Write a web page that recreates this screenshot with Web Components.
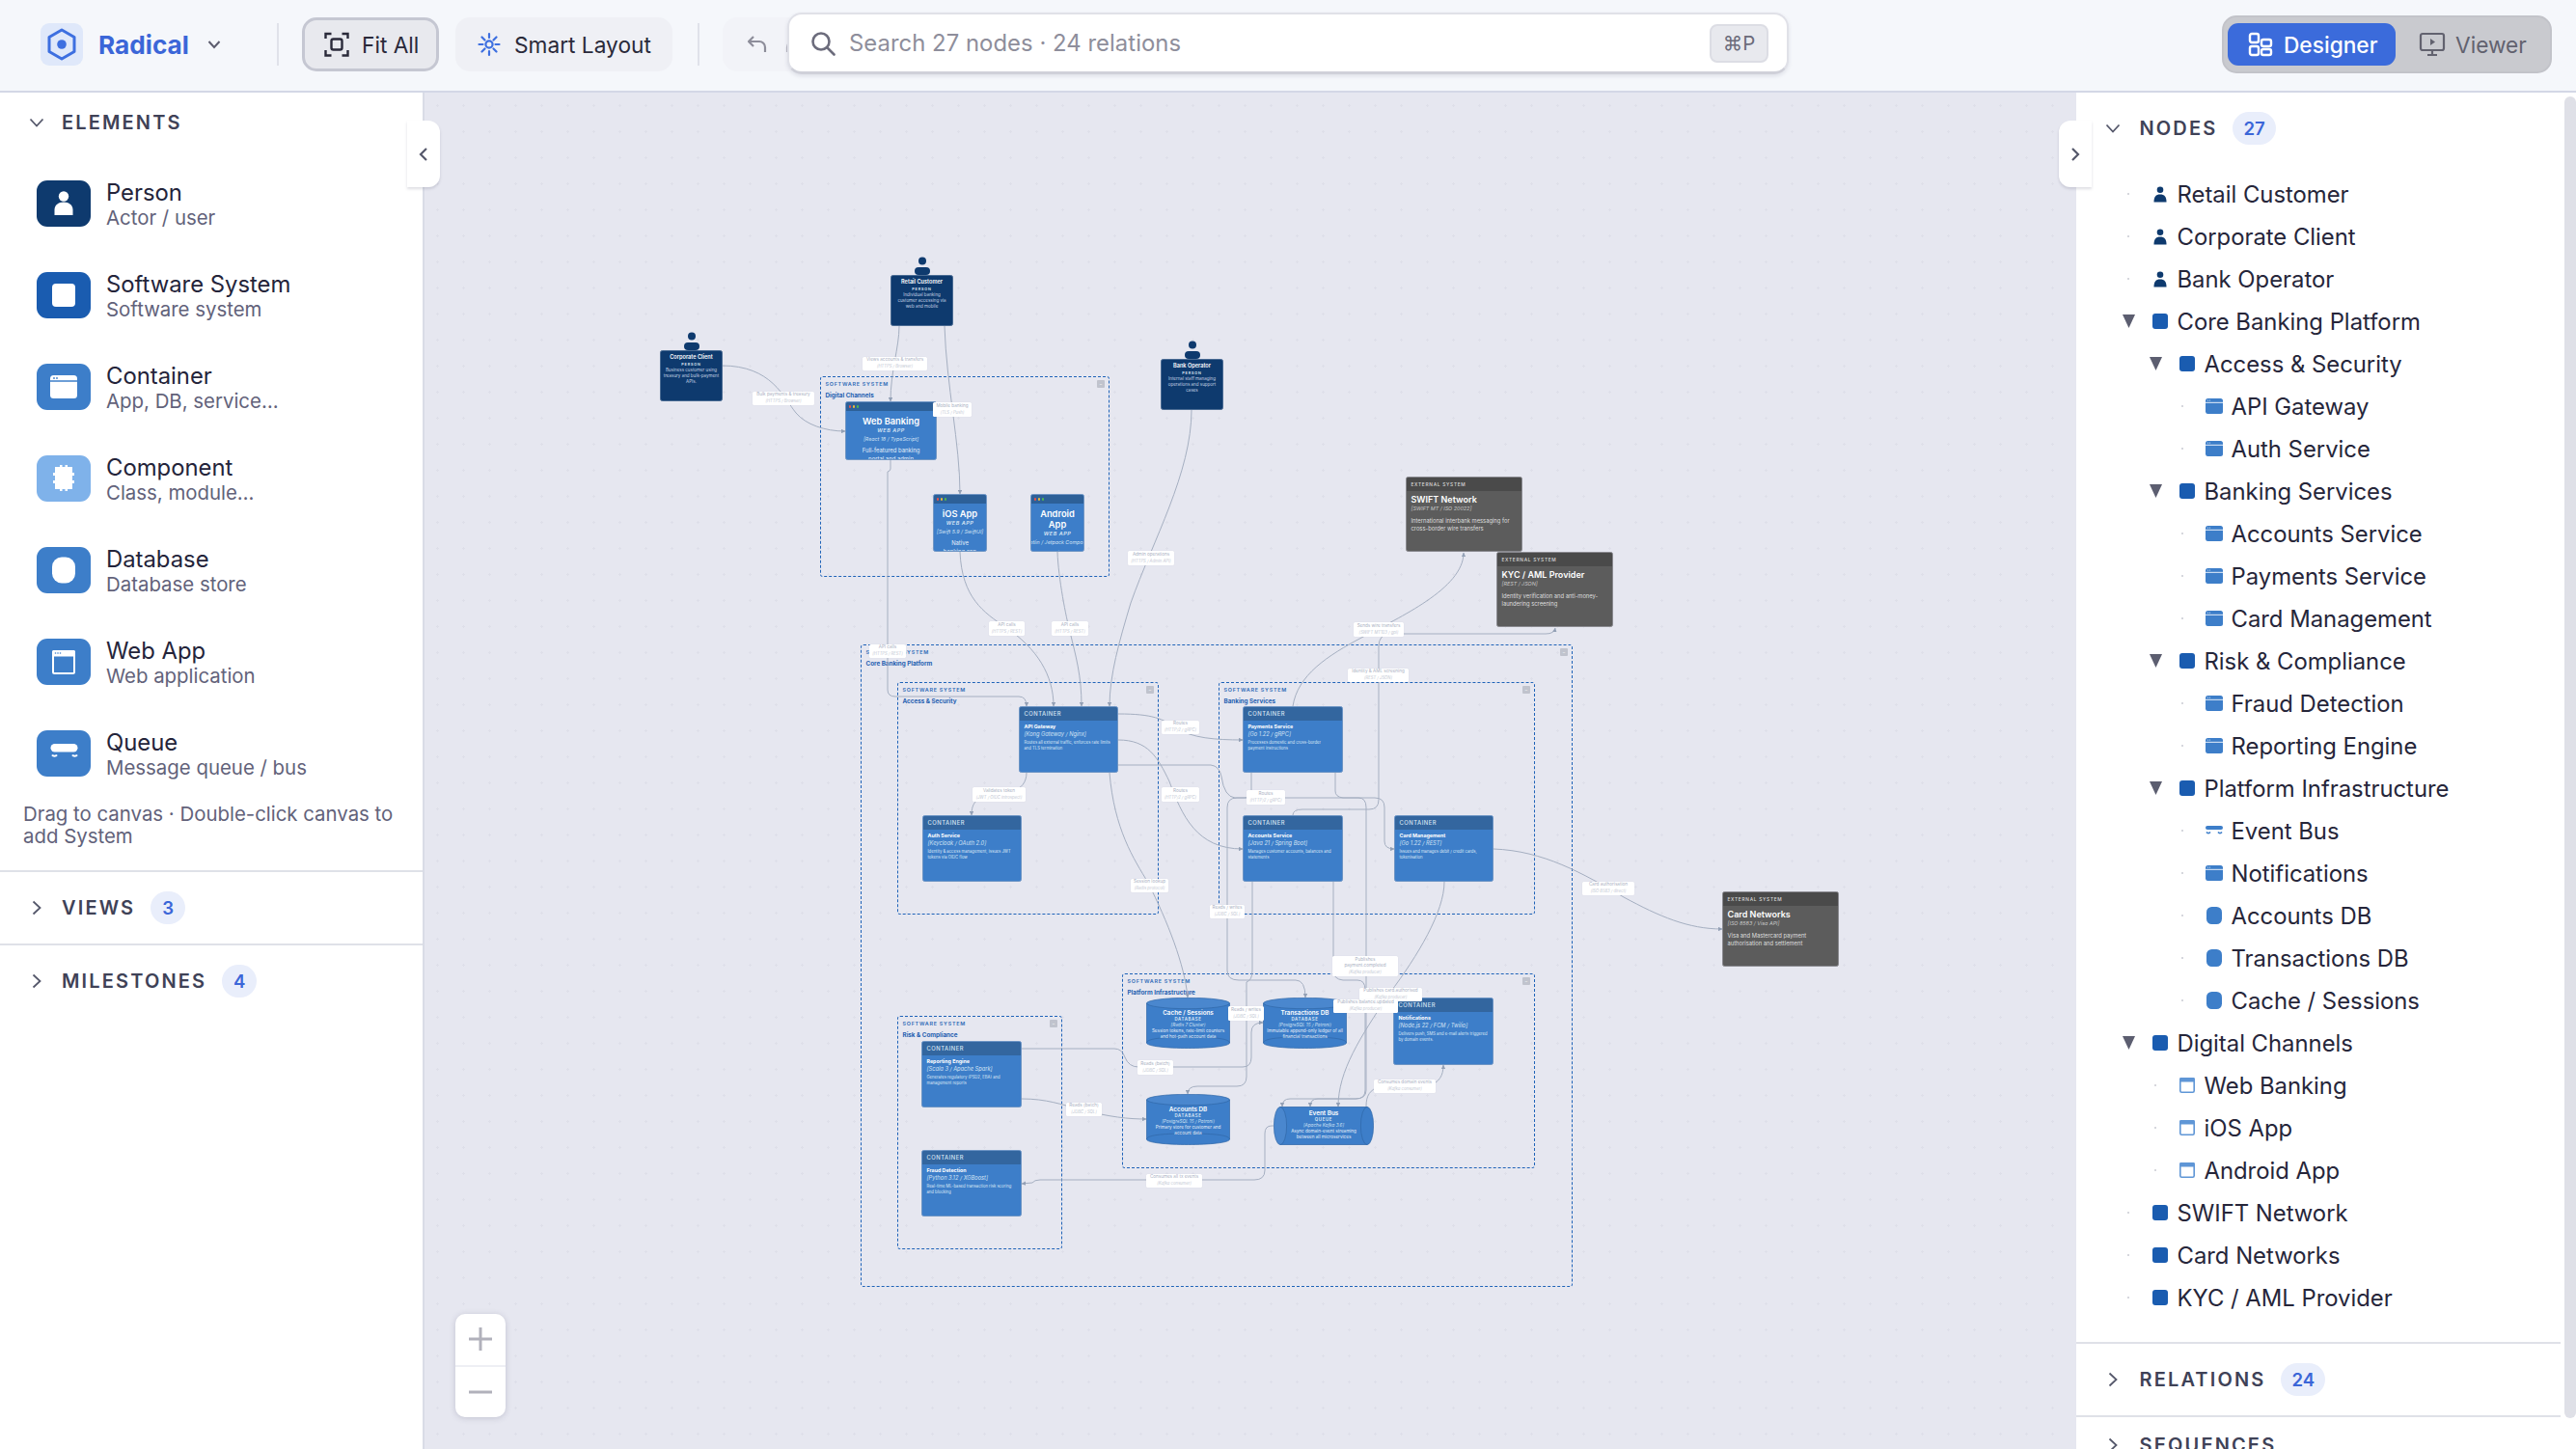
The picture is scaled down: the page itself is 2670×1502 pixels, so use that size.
<!DOCTYPE html>
<html lang="en"><head><meta charset="utf-8"><title>Radical</title>
<style>
html,body{margin:0;padding:0;height:100%;overflow:hidden;background:#f5f7fb;font-family:Inter,"Liberation Sans",sans-serif}
</style></head>
<body>
<app-shell>
  <top-bar slot="top"></top-bar>
  <palette-panel slot="left">
    <section-head label="ELEMENTS" open compact></section-head>
    <palette-list>
      <palette-item icon="person" color="#0e3a6e" name="Person" sub="Actor / user"></palette-item>
      <palette-item icon="system" color="#1a5cb0" name="Software System" sub="Software system"></palette-item>
      <palette-item icon="container" color="#3d7ec9" name="Container" sub="App, DB, service…"></palette-item>
      <palette-item icon="component" color="#7fb2ea" name="Component" sub="Class, module…"></palette-item>
      <palette-item icon="database" color="#3d7ec9" name="Database" sub="Database store"></palette-item>
      <palette-item icon="webapp" color="#3d7ec9" name="Web App" sub="Web application"></palette-item>
      <palette-item icon="queue" color="#3d7ec9" name="Queue" sub="Message queue / bus"></palette-item>
      <palette-hint>Drag to canvas · Double-click canvas to add System</palette-hint>
    </palette-list>
    <section-head label="VIEWS" count="3" ruled></section-head>
    <section-head label="MILESTONES" count="4" ruled></section-head>
  </palette-panel>
  <diagram-canvas slot="center">
    <d-group x="892" y="668" w="738" h="666" name="Core Banking Platform"></d-group>
    <d-group x="850" y="390" w="300" h="208" name="Digital Channels"></d-group>
    <d-group x="930" y="707" w="271" h="241" name="Access &amp; Security"></d-group>
    <d-group x="1263" y="707" w="328" h="241" name="Banking Services"></d-group>
    <d-group x="1163" y="1009" w="428" h="202" name="Platform Infrastructure"></d-group>
    <d-group x="930" y="1053" w="171" h="242" name="Risk &amp; Compliance"></d-group>
    <d-edges></d-edges>
    <d-node kind="person" x="923" y="285" w="65" h="53" name="Retail Customer" desc="Individual banking customer accessing via web and mobile"></d-node>
    <d-node kind="person" x="684" y="363" w="65" h="53" name="Corporate Client" desc="Business customer using treasury and bulk-payment APIs."></d-node>
    <d-node kind="person" x="1203" y="372" w="65" h="53" name="Bank Operator" desc="Internal staff managing operations and support cases"></d-node>
    <d-node kind="webapp" x="876" y="416" w="95" h="61" name="Web Banking" tech="[React 18 / TypeScript]" desc="Full-featured banking portal and admin dashboard"></d-node>
    <d-node kind="webapp" x="967" y="512" w="56" h="60" name="iOS App" tech="[Swift 5.9 / SwiftUI]" desc="Native banking app"></d-node>
    <d-node kind="webapp" x="1068" y="512" w="56" h="60" name="Android App" tech="[Kotlin / Jetpack Compose]" desc="Native Android app"></d-node>
    <d-node kind="external" x="1457" y="494" w="121" h="78" name="SWIFT Network" tech="[SWIFT MT / ISO 20022]" desc="International interbank messaging for cross-border wire transfers"></d-node>
    <d-node kind="external" x="1551" y="572" w="121" h="78" name="KYC / AML Provider" tech="[REST / JSON]" desc="Identity verification and anti-money-laundering screening"></d-node>
    <d-node kind="external" x="1785" y="924" w="121" h="78" name="Card Networks" tech="[ISO 8583 / Visa API]" desc="Visa and Mastercard payment authorisation and settlement"></d-node>
    <d-node kind="container" x="1056" y="732" w="103" h="69" name="API Gateway" tech="[Kong Gateway / Nginx]" desc="Routes all external traffic, enforces rate limits and TLS termination"></d-node>
    <d-node kind="container" x="956" y="845" w="103" h="69" name="Auth Service" tech="[Keycloak / OAuth 2.0]" desc="Identity &amp; access management, issues JWT tokens via OIDC flow"></d-node>
    <d-node kind="container" x="1288" y="732" w="104" h="69" name="Payments Service" tech="[Go 1.22 / gRPC]" desc="Processes domestic and cross-border payment instructions"></d-node>
    <d-node kind="container" x="1288" y="845" w="104" h="69" name="Accounts Service" tech="[Java 21 / Spring Boot]" desc="Manages customer accounts, balances and statements"></d-node>
    <d-node kind="container" x="1445" y="845" w="103" h="69" name="Card Management" tech="[Go 1.22 / REST]" desc="Issues and manages debit / credit cards, tokenisation"></d-node>
    <d-node kind="container" x="1444" y="1034" w="104" h="70" name="Notifications" tech="[Node.js 22 / FCM / Twilio]" desc="Delivers push, SMS and e-mail alerts triggered by domain events."></d-node>
    <d-node kind="container" x="955" y="1079" w="104" h="69" name="Reporting Engine" tech="[Scala 3 / Apache Spark]" desc="Generates regulatory (PSD2, EBA) and management reports"></d-node>
    <d-node kind="container" x="955" y="1192" w="104" h="69" name="Fraud Detection" tech="[Python 3.12 / XGBoost]" desc="Real-time ML-based transaction risk scoring and blocking"></d-node>
    <d-node kind="database" x="1188" y="1034" w="87" h="53" name="Cache / Sessions" tech="[Redis 7 Cluster]" desc="Session tokens, rate-limit counters and hot-path account data"></d-node>
    <d-node kind="database" x="1309" y="1034" w="87" h="53" name="Transactions DB" tech="[PostgreSQL 15 / Patroni]" desc="Immutable append-only ledger of all financial transactions"></d-node>
    <d-node kind="database" x="1188" y="1134" w="87" h="53" name="Accounts DB" tech="[PostgreSQL 15 / Patroni]" desc="Primary store for customer and account data"></d-node>
    <d-node kind="queue" x="1320" y="1147" w="104" h="40" name="Event Bus" tech="[Apache Kafka 3.6]" desc="Async domain-event streaming between all microservices"></d-node>
    <d-label x="894" y="370" w="67" h="14" text="Views accounts &amp; transfers" tech="[HTTPS / Browser]"></d-label>
    <d-label x="967" y="417" w="40" h="15" text="Mobile banking" tech="[TLS / Push]"></d-label>
    <d-label x="780" y="406" w="64" h="14" text="Bulk payments &amp; treasury" tech="[HTTPS / Browser]"></d-label>
    <d-label x="1169" y="571" w="48" h="15" text="Admin operations" tech="[HTTPS / Admin API]"></d-label>
    <d-label x="901" y="668" w="38" h="14" text="API calls" tech="[HTTPS / REST]"></d-label>
    <d-label x="1025" y="644" w="37" h="15" text="API calls" tech="[HTTPS / REST]"></d-label>
    <d-label x="1090" y="644" w="38" h="15" text="API calls" tech="[HTTPS / REST]"></d-label>
    <d-label x="1008" y="816" w="55" h="15" text="Validates token" tech="[JWT / OIDC introspect]"></d-label>
    <d-label x="1204" y="747" w="39" h="14" text="Routes" tech="[HTTP/2 / gRPC]"></d-label>
    <d-label x="1204" y="816" w="39" h="15" text="Routes" tech="[HTTP/2 / gRPC]"></d-label>
    <d-label x="1292" y="819" w="40" h="15" text="Routes" tech="[HTTP/2 / gRPC]"></d-label>
    <d-label x="1172" y="911" w="39" h="14" text="Session lookup" tech="[Redis protocol]"></d-label>
    <d-label x="1254" y="938" w="36" h="14" text="Reads / writes" tech="[JDBC / SQL]"></d-label>
    <d-label x="1403" y="645" w="52" h="15" text="Sends wire transfers" tech="[SWIFT MT103 / gpi]"></d-label>
    <d-label x="1397" y="693" w="63" h="14" text="Identity &amp; AML screening" tech="[REST / JSON]"></d-label>
    <d-label x="1640" y="914" w="54" h="14" text="Card authorisation" tech="[ISO 8583 / direct]"></d-label>
    <d-label x="1381" y="991" w="68" h="21" text="Publishes payment.completed" tech="[Kafka producer]" wrap></d-label>
    <d-label x="1409" y="1024" w="65" h="14" text="Publishes card.authorised" tech="[Kafka producer]"></d-label>
    <d-label x="1382" y="1036" w="67" h="14" text="Publishes balance.updated" tech="[Kafka producer]"></d-label>
    <d-label x="1273" y="1043" w="37" h="15" text="Reads / writes" tech="[JDBC / SQL]"></d-label>
    <d-label x="1179" y="1099" w="37" h="15" text="Reads (batch)" tech="[JDBC / SQL]"></d-label>
    <d-label x="1105" y="1143" w="37" h="14" text="Reads (batch)" tech="[JDBC / SQL]"></d-label>
    <d-label x="1424" y="1119" w="64" h="14" text="Consumes domain events" tech="[Kafka consumer]"></d-label>
    <d-label x="1188" y="1217" w="58" h="14" text="Consumes all tx events" tech="[Kafka consumer]"></d-label>
    <zoom-control></zoom-control>
    <panel-tab side="left"></panel-tab>
    <panel-tab side="right"></panel-tab>
  </diagram-canvas>
  <outline-panel slot="right">
    <section-head label="NODES" count="27" open></section-head>
    <tree-list>
      <tree-row level="0" kind="person">Retail Customer</tree-row>
      <tree-row level="0" kind="person">Corporate Client</tree-row>
      <tree-row level="0" kind="person">Bank Operator</tree-row>
      <tree-row level="0" kind="system" caret>Core Banking Platform</tree-row>
      <tree-row level="1" kind="system" caret>Access &amp; Security</tree-row>
      <tree-row level="2" kind="container">API Gateway</tree-row>
      <tree-row level="2" kind="container">Auth Service</tree-row>
      <tree-row level="1" kind="system" caret>Banking Services</tree-row>
      <tree-row level="2" kind="container">Accounts Service</tree-row>
      <tree-row level="2" kind="container">Payments Service</tree-row>
      <tree-row level="2" kind="container">Card Management</tree-row>
      <tree-row level="1" kind="system" caret>Risk &amp; Compliance</tree-row>
      <tree-row level="2" kind="container">Fraud Detection</tree-row>
      <tree-row level="2" kind="container">Reporting Engine</tree-row>
      <tree-row level="1" kind="system" caret>Platform Infrastructure</tree-row>
      <tree-row level="2" kind="queue">Event Bus</tree-row>
      <tree-row level="2" kind="container">Notifications</tree-row>
      <tree-row level="2" kind="database">Accounts DB</tree-row>
      <tree-row level="2" kind="database">Transactions DB</tree-row>
      <tree-row level="2" kind="database">Cache / Sessions</tree-row>
      <tree-row level="0" kind="system" caret>Digital Channels</tree-row>
      <tree-row level="1" kind="webapp">Web Banking</tree-row>
      <tree-row level="1" kind="webapp">iOS App</tree-row>
      <tree-row level="1" kind="webapp">Android App</tree-row>
      <tree-row level="0" kind="system">SWIFT Network</tree-row>
      <tree-row level="0" kind="system">Card Networks</tree-row>
      <tree-row level="0" kind="system">KYC / AML Provider</tree-row>
    </tree-list>
    <section-head label="RELATIONS" count="24" ruled></section-head>
    <section-head label="SEQUENCES" ruled tight></section-head>
  </outline-panel>
</app-shell>
<script>
const FONT = 'Inter,"Liberation Sans",sans-serif';
function def(name, render) {
  customElements.define(name, class extends HTMLElement {
    constructor(){ super(); this.attachShadow({mode:'open'}); }
    connectedCallback(){ this.shadowRoot.innerHTML = render(this); }
  });
}
const esc = s => (s||'').replace(/&/g,'&amp;').replace(/</g,'&lt;');
const OX = 440, OY = 96;
const placed = el => `left:${+el.getAttribute('x')-OX}px;top:${+el.getAttribute('y')-OY}px;width:${el.getAttribute('w')}px;height:${el.getAttribute('h')}px;`;

def('app-shell', () => `<style>
:host{display:grid;grid-template-columns:440px 1fr 518px;grid-template-rows:96px 1fr;width:2670px;height:1502px;overflow:hidden;font-family:${FONT}}
.top{grid-column:1/4}
</style><div class="top"><slot name="top"></slot></div><slot name="left"></slot><slot name="center"></slot><slot name="right"></slot>`);

def('top-bar', () => `<style>
:host{display:flex;align-items:center;box-sizing:border-box;height:96px;padding:0 25px 2px 42px;background:#f5f7fb;border-bottom:2px solid #d3d7e6;position:relative;color:#26263a}
.logo{width:44px;height:44px;border-radius:9px;background:#dfe8fa;display:flex;align-items:center;justify-content:center}
.brand{font-weight:700;font-size:26.2px;color:#3b66d8;margin-left:16px;width:93px;white-space:nowrap}
.drop{margin-left:20px;display:flex}
.sep{width:2px;height:44px;background:#e0e2ea;margin:0 24px 0 26px}
.sep.a{margin:0 24px 0 58px}
.btn{display:flex;align-items:center;box-sizing:border-box;height:56px;border-radius:15px;font-size:22.7px;color:#2a2a3a;white-space:nowrap}
.fit{width:142px;background:#e8e9ee;border:3px solid #c5c7d2;padding-left:20px;gap:13px}
.smart{width:225px;background:#eff0f5;padding-left:23px;gap:14px;margin-left:17px}
.undo{width:130px;height:56px;background:#f2f3f8;border-radius:15px;display:flex;align-items:center;padding-left:25px;box-sizing:border-box;gap:17px}
.search{position:absolute;left:816px;top:13px;width:1038px;height:64px;box-sizing:border-box;background:#fff;border:2px solid #e0e1e8;border-bottom:3px solid #cfd0d9;border-radius:15px;display:flex;align-items:center;padding:0 19px 0 22px;box-shadow:0 2px 4px rgba(60,60,90,.12)}
.ph{margin-left:14px;flex:1;font-size:23.84px;color:#8e8e9b;letter-spacing:.05px}
.kbd{width:61px;height:40px;box-sizing:border-box;background:#e8e9ee;border:2px solid #dcdde4;border-radius:8px;font-size:20.4px;color:#6b6b7a;display:flex;align-items:center;justify-content:center}
.grow{flex:1}
.seg{display:flex;box-sizing:border-box;width:342px;height:60px;background:#c9cacf;border:2px solid #c2c3c9;border-radius:15px;padding:6px 4px;align-items:stretch}
.d{width:174px;background:#3b6bdb;border-radius:11px;color:#fff;display:flex;align-items:center;gap:11px;padding-left:21px;box-sizing:border-box;font-size:22.7px;font-weight:500}
.v{flex:1;display:flex;align-items:center;gap:10px;padding-left:24px;color:#62626f;font-size:22.7px}
</style>
<div class="logo"><svg width="32" height="34" viewBox="0 0 32 34"><path d="M16 2 29 9.5v15L16 32 3 24.5v-15z" fill="none" stroke="#3d6fe0" stroke-width="3" stroke-linejoin="round"/><circle cx="16" cy="17" r="4.8" fill="#3d6fe0"/></svg></div>
<span class="brand">Radical</span>
<span class="drop"><svg width="14" height="10" viewBox="0 0 14 10"><path d="M1.5 2 7 8l5.5-6" fill="none" stroke="#5c5c6e" stroke-width="2"/></svg></span>
<span class="sep a"></span>
<div class="btn fit"><svg width="26" height="26" viewBox="0 0 26 26" fill="none" stroke="#2a2a3a" stroke-width="2.4"><path d="M1.5 7V2h6M18.500 2h6v5M24.500 19v5.500h-6M7.500 24.500h-6V19"/><rect x="7.500" y="7.500" width="11" height="11" rx="2"/></svg><span>Fit All</span></div>
<div class="btn smart"><svg width="24" height="26" viewBox="0 0 24 26" fill="none" stroke="#3d6fe0" stroke-width="2.2" stroke-linecap="round"><circle cx="12" cy="13" r="3.600"/><path d="M12 2v4M12 20v4M1.500 13h4M18.500 13h4M4.500 5.500l3 3M16.500 17.500l3 3M19.500 5.500l-3 3M7.500 17.500l-3 3"/></svg><span>Smart Layout</span></div>
<span class="sep"></span>
<div class="undo"><svg width="22" height="20" viewBox="0 0 22 20" fill="none" stroke="#8d8d9a" stroke-width="2.2" stroke-linejoin="round"><path d="M7 2 2 7l5 5M2 7h11a6 6 0 0 1 6 6v5"/></svg><svg width="22" height="20" viewBox="0 0 22 20" fill="none" stroke="#b9b9c4" stroke-width="2.2"><path d="M15 2l5 5-5 5M20 7H9a6 6 0 0 0-6 6v5"/></svg></div>
<div class="search"><svg width="26" height="26" viewBox="0 0 26 26" fill="none" stroke="#6c6c7c" stroke-width="2.600" stroke-linecap="round"><circle cx="11" cy="11" r="8.500"/><path d="m17.500 17.500 7 7"/></svg><span class="ph">Search 27 nodes · 24 relations</span><span class="kbd">⌘P</span></div>
<span class="grow"></span>
<div class="seg"><div class="d"><svg width="26" height="26" viewBox="0 0 26 26" fill="none" stroke="#fff" stroke-width="2.400"><rect x="2" y="2" width="9" height="9" rx="2"/><rect x="14" y="8" width="10" height="7" rx="2"/><rect x="2" y="15" width="9" height="9" rx="2"/><rect x="14" y="18" width="10" height="6" rx="2"/></svg><span>Designer</span></div><div class="v"><svg width="28" height="26" viewBox="0 0 28 26" fill="none" stroke="#62626f" stroke-width="2.200"><rect x="2" y="2" width="24" height="17" rx="2"/><path d="M9 24h10M14 19v5"/><path d="M12 7l5 3.500-5 3.500z" fill="#62626f" stroke="none"/></svg><span>Viewer</span></div></div>`);

def('section-head', el => {
  const open = el.hasAttribute('open'), c = el.getAttribute('count');
  const h = el.hasAttribute('tight') ? 60 : el.hasAttribute('compact') ? 62 : el.hasAttribute('ruled') ? 76 : 74;
  return `<style>
:host{display:flex;align-items:center;box-sizing:border-box;height:${h}px;padding-left:var(--head-pad,30px);${el.hasAttribute('ruled')?'border-top:2px solid #dfe1e8;':''}flex:none}
.c{width:16px;display:flex;justify-content:center;margin-right:var(--head-gap,18px)}
.t{font-size:20px;font-weight:600;letter-spacing:2.15px;color:#3f4257}
.b{margin-left:16px;height:34px;min-width:36px;padding:0 11px;box-sizing:border-box;border-radius:17px;background:#e9eefb;color:#3b66d8;font-size:18.6px;font-weight:600;display:flex;align-items:center;justify-content:center}
</style><span class="c"><svg width="16" height="16" viewBox="0 0 16 16" fill="none" stroke="#55586b" stroke-width="1.800">${open?'<path d="M1.500 4.500 8 11.500l6.500-7"/>':'<path d="M4.500 1.500 11.500 8l-7 6.500"/>'}</svg></span><span class="t">${el.getAttribute('label')}</span>${c?`<span class="b">${c}</span>`:''}`;
});

def('palette-panel', () => `<style>:host{display:flex;flex-direction:column;box-sizing:border-box;background:#fff;border-right:2px solid #d9dce6;overflow:hidden;position:relative}</style><slot></slot>`);
def('palette-list', () => `<style>:host{display:flex;flex-direction:column;gap:47px;padding:29px 0 24px 38px}</style><slot></slot>`);
def('palette-hint', () => `<style>:host{display:block;margin:-20px 20px 0 -14px;font-size:20.4px;line-height:23px;color:#62627a}</style><slot></slot>`);

const paletteIcons = {
  person:`<circle cx="28" cy="16.500" r="5.200" fill="#fff"/><path d="M18.500 36v-5.500c0-5 4-8 9.500-8s9.500 3 9.500 8V36z" fill="#fff"/>`,
  system:`<rect x="16" y="12" width="24" height="24" rx="4" fill="#fff"/>`,
  container:`<rect x="14" y="12" width="28" height="24" rx="3.500" fill="#fff"/><path d="M14 18h28" stroke="#3d7ec9" stroke-width="1.500"/><circle cx="18" cy="15" r=".9" fill="#3d7ec9"/><circle cx="21" cy="15" r=".9" fill="#3d7ec9"/>`,
  component:`<path d="M19 12h5v-2h2.500v2h3v-2H32v2h5v6h2v3h-2v5h2v3h-2v6H32v2h-2.500v-2h-3v2H24v-2h-5v-6h-2v-3h2v-5h-2v-3h2z" fill="#fff"/>`,
  database:`<rect x="16" y="10.500" width="24" height="27" rx="10" fill="#fff"/>`,
  webapp:`<rect x="17" y="13" width="22" height="23" rx="1.500" fill="#3d7ec9" stroke="#fff" stroke-width="2"/><rect x="16" y="12" width="24" height="6.500" rx="1.500" fill="#fff"/><circle cx="19.500" cy="15" r=".8" fill="#3d7ec9"/><circle cx="22" cy="15" r=".8" fill="#3d7ec9"/><circle cx="24.500" cy="15" r=".8" fill="#3d7ec9"/>`,
  queue:`<rect x="14.500" y="14" width="28" height="8.500" rx="4.200" fill="#fff"/><path d="M16 25.500c1 1.500 4 1.500 5 0M37 25.500c1 1.500 4 1.500 5 0" stroke="#fff" stroke-width="2" fill="none"/>`
};
def('palette-item', el => `<style>
:host{display:flex;align-items:center;height:48px;gap:16px}
.i{width:56px;height:48px;border-radius:11px;background:${el.getAttribute('color')};flex:none}
.i svg{display:block}
.x{padding-top:4px;display:flex;flex-direction:column}
.n{font-size:23.84px;line-height:26px;color:#24243a}
.s{font-size:20.4px;line-height:26px;color:#62627a}
</style><div class="i"><svg width="56" height="48" viewBox="0 0 56 48">${paletteIcons[el.getAttribute('icon')]}</svg></div><div class="x"><span class="n">${esc(el.getAttribute('name'))}</span><span class="s">${esc(el.getAttribute('sub'))}</span></div>`);

def('outline-panel', () => `<style>:host{display:flex;flex-direction:column;box-sizing:border-box;background:#fff;overflow:hidden;position:relative;padding-right:16px;--head-pad:30px;--head-gap:19.5px}
.bar{position:absolute;right:0;top:4px;width:12px;height:1370px;border-radius:6px;background:#dfe0e7}</style><slot></slot><div class="bar"></div>`);
def('tree-list', () => `<style>:host{display:block;padding:9px 0 24px;flex:none}</style><slot></slot>`);

const treeIcons = {
  person:`<svg width="14" height="17" viewBox="0 0 14 17"><circle cx="7" cy="3.800" r="3.300" fill="#0e3a6e"/><path d="M.5 16.500c0-5.500 2-8 6.500-8s6.500 2.500 6.500 8z" fill="#0e3a6e"/></svg>`,
  system:`<svg width="16" height="16" viewBox="0 0 16 16"><rect width="16" height="16" rx="3" fill="#1a5cb0"/></svg>`,
  container:`<svg width="18" height="16" viewBox="0 0 18 16"><rect width="18" height="16" rx="2.500" fill="#3d7ec9"/><rect x="0" y="3.800" width="18" height="1.100" fill="#d6e5f6"/><circle cx="2.500" cy="2" r=".6" fill="#d6e5f6"/><circle cx="4.500" cy="2" r=".6" fill="#d6e5f6"/></svg>`,
  database:`<svg width="16" height="18" viewBox="0 0 16 18"><rect width="16" height="18" rx="5.500" fill="#3d7ec9"/></svg>`,
  webapp:`<svg width="16" height="16" viewBox="0 0 16 16"><rect x=".8" y=".8" width="14.400" height="14.400" rx="1.500" fill="#fff" stroke="#5f96d6" stroke-width="1.600"/><rect x="0" y="0" width="16" height="4.500" rx="1.500" fill="#5f96d6"/></svg>`,
  queue:`<svg width="18" height="10" viewBox="0 0 18 10"><rect width="18" height="4" rx="2" fill="#3d7ec9"/><path d="M1 6.500c1 1.500 3 1.500 4 0M13 6.500c1 1.500 3 1.500 4 0" stroke="#3d7ec9" stroke-width="1.500" fill="none"/></svg>`
};
def('tree-row', el => `<style>
:host{display:flex;align-items:center;height:44px;padding-left:${45+28*(+el.getAttribute('level'))}px;font-size:23.84px;color:#26263a;white-space:nowrap}
.c{width:18px;display:flex;justify-content:center;margin-right:14px}
.i{width:20px;display:flex;justify-content:center;margin-right:7.5px}
.dot{width:2px;height:2px;background:#c9cad2;border-radius:50%}
</style><span class="c">${el.hasAttribute('caret')?'<svg width="13" height="14" viewBox="0 0 13 14"><path d="M0 0h13L6.500 14z" fill="#5c5e70"/></svg>':'<span class="dot"></span>'}</span><span class="i">${treeIcons[el.getAttribute('kind')]}</span><slot></slot>`);

def('diagram-canvas', () => `<style>:host{display:block;position:relative;overflow:visible;height:1406px;background-color:#e6e7f0;background-image:radial-gradient(circle,#dedfe9 1px,transparent 1.300px);background-size:27px 27px}</style><slot></slot>`);

def('panel-tab', el => { const l = el.getAttribute('side')==='left'; return `<style>
:host{position:absolute;z-index:5;${l?'left:-18px;width:34px;border-radius:0 12px 12px 0;':'right:-16px;width:34px;border-radius:12px 0 0 12px;'}top:29px;height:69px;background:#fff;box-shadow:0 2px 3px rgba(70,70,100,.18);display:flex;align-items:center;justify-content:center}
</style><svg width="12" height="16" viewBox="0 0 12 16" fill="none" stroke="#55586b" stroke-width="2.200">${l?'<path d="M9 2 3 8l6 6"/>':'<path d="M3 2l6 6-6 6"/>'}</svg>`; });

def('zoom-control', () => `<style>
:host{position:absolute;left:32px;top:1266px;width:52px;height:107px;background:#fff;border-radius:10px;box-shadow:0 1px 6px rgba(70,70,100,.22);display:flex;flex-direction:column}
.b{height:53px;display:flex;align-items:center;justify-content:center}
.b+.b{border-top:2px solid #eeeff4}
</style><div class="b"><svg width="24" height="24" viewBox="0 0 24 24" fill="none" stroke="#b1b1bb" stroke-width="3"><path d="M12 0v24M0 12h24"/></svg></div><div class="b"><svg width="24" height="4" viewBox="0 0 24 4" fill="none" stroke="#b1b1bb" stroke-width="3"><path d="M0 2h24"/></svg></div>`);

def('d-group', el => `<style>
:host{position:absolute;${placed(el)}box-sizing:border-box;border:1px dashed #1f63b8;border-radius:3px}
.l{position:absolute;left:4.500px;top:4px;font-size:5.400px;line-height:7px;font-weight:600;letter-spacing:.75px;color:#2c69b6;white-space:nowrap}
.n{position:absolute;left:4.500px;top:14.500px;font-size:6.300px;line-height:9px;font-weight:700;color:#1f5fb0;white-space:nowrap}
.b{position:absolute;right:4px;top:2.500px;width:8px;height:8px;border-radius:1px;background:#c0c3cd;color:#fff;font-size:5px;line-height:8px;text-align:center}
</style><span class="l">SOFTWARE SYSTEM</span><span class="n">${esc(el.getAttribute('name'))}</span><span class="b">−</span>`);

const personIcon = `<svg style="position:absolute;left:50%;margin-left:-9px;top:-19.500px" width="18" height="19" viewBox="0 0 18 19"><circle cx="9" cy="4.500" r="4" fill="#0e3a6e"/><rect x="1" y="11" width="16" height="8" rx="4" fill="#0e3a6e"/></svg>`;
def('d-node', el => {
  const k = el.getAttribute('kind'), name = esc(el.getAttribute('name')), tech = esc(el.getAttribute('tech')), desc = esc(el.getAttribute('desc'));
  const base = `:host{position:absolute;${placed(el)}color:#fff;white-space:normal}.box{position:absolute;inset:0;overflow:hidden;box-sizing:border-box;border-radius:2.500px}`;
  if (k==='person') return `<style>${base}.box{background:#0e3a6e;border:.5px solid #4a6b93;text-align:center;padding:3px 2px 0}
.n{font-size:5.600px;line-height:7px;font-weight:600}.t{font-size:3.800px;line-height:6px;margin-top:1px;letter-spacing:.8px;font-weight:600;color:#dfe7f1}.d{font-size:4.500px;line-height:6px;color:#c4d2e4}</style>${personIcon}<div class="box"><div class="n">${name}</div><div class="t">PERSON</div><div class="d">${desc}</div></div>`;
  if (k==='webapp') return `<style>${base}.box{background:#3d7ec9;border:.5px solid #7096c4;text-align:center}
.h{height:9px;background:#2d6098;display:flex;align-items:center;gap:1.500px;padding-left:3px}.h i{width:2.400px;height:2.400px;border-radius:50%}
.c{padding:5px 8px 0}.n{font-size:9.300px;line-height:11px;font-weight:600}
.t{font-size:5.400px;line-height:8px;font-weight:600;font-style:italic;letter-spacing:.55px;color:#dbe7f5;white-space:nowrap}
.k{font-size:5.300px;line-height:8px;margin-top:.7px;font-style:italic;color:#cfe0f3;white-space:nowrap;display:flex;justify-content:center}
.d{font-size:5.900px;line-height:9.300px;margin-top:3.300px;color:#e4eef9}</style><div class="box"><div class="h"><i style="background:#e8524a"></i><i style="background:#e6b93e"></i><i style="background:#4fb84f"></i></div><div class="c"><div class="n">${name}</div><div class="t">WEB APP</div><div class="k"><span>${tech}</span></div><div class="d">${desc}</div></div></div>`;
  if (k==='external') return `<style>${base}.box{background:#5c5c5c;border:.5px solid #8a8a90}
.h{height:14px;background:#4a4a4a;font-size:4.800px;line-height:14px;padding-left:4.500px;letter-spacing:.72px;font-weight:500;color:#dcdcdc}
.c{padding:3px 8px 0 4.500px}.n{font-size:9px;line-height:11px;font-weight:600;white-space:nowrap}.k{font-size:5.400px;line-height:9px;font-style:italic;color:#c8c8c8}.d{font-size:5.800px;line-height:8.700px;margin-top:3.500px;color:#dedede}</style><div class="box"><div class="h">EXTERNAL SYSTEM</div><div class="c"><div class="n">${name}</div><div class="k">${tech}</div><div class="d">${desc}</div></div></div>`;
  if (k==='container') return `<style>${base}.box{background:#3d7ec9;border:.5px solid #6c94c4}
.h{height:14px;background:#33669f;font-size:5.800px;line-height:14px;padding-left:4.500px;letter-spacing:.55px;font-weight:500;color:#d9e5f3}
.c{padding:2px 4.500px 0}.n{font-size:5.300px;line-height:8px;font-weight:700}.k{font-size:5.700px;line-height:8px;font-style:italic;color:#d2e2f4;white-space:nowrap}.d{font-size:4.200px;line-height:6px;margin-top:2px;color:#dce8f6}</style><div class="box"><div class="h">CONTAINER</div><div class="c"><div class="n">${name}</div><div class="k">${tech}</div><div class="d">${desc}</div></div></div>`;
  if (k==='database') { const w=+el.getAttribute('w'), h=+el.getAttribute('h'); return `<style>${base}svg{position:absolute;inset:0}.box{text-align:center;padding:13px 3px 0;border-radius:0}
.n{font-size:6.300px;line-height:7px;font-weight:600}.t{font-size:4.300px;line-height:6px;letter-spacing:.7px;font-weight:600;color:#dfe9f6}.k{font-size:4.600px;line-height:6px;font-style:italic;color:#cfe0f3;white-space:nowrap}.d{font-size:4.600px;line-height:6px;color:#e4eef9}</style><svg width="${w}" height="${h}" viewBox="0 0 ${w} ${h}"><path d="M.5 6v${h-12}C.5 ${h-2.500} ${w/4} ${h-.5} ${w/2} ${h-.5}S${w-.5} ${h-2.500} ${w-.5} ${h-6}V6z" fill="#3d7ec9" stroke="#2f67a8" stroke-width=".7"/><ellipse cx="${w/2}" cy="6" rx="${w/2-.5}" ry="5.700" fill="#4a87ce" stroke="#2f67a8" stroke-width=".7"/><path d="M.5 ${h-6}C.5 ${h-11} ${w/4} ${h-12} ${w/2} ${h-12}S${w-.5} ${h-11} ${w-.5} ${h-6}" fill="none" stroke="#2f67a8" stroke-width=".7"/></svg><div class="box"><div class="n">${name}</div><div class="t">DATABASE</div><div class="k">${tech}</div><div class="d">${desc}</div></div>`; }
  if (k==='queue') { const w=+el.getAttribute('w'), h=+el.getAttribute('h'); return `<style>${base}svg{position:absolute;inset:0}.box{text-align:center;padding:4px 14px 0;border-radius:0}
.n{font-size:6.400px;line-height:7px;font-weight:600}.t{font-size:4.300px;line-height:6px;letter-spacing:.7px;font-weight:600;color:#dfe9f6}.k{font-size:4.600px;line-height:6px;font-style:italic;color:#cfe0f3;white-space:nowrap}.d{font-size:4.600px;line-height:6px;color:#e4eef9}</style><svg width="${w}" height="${h}" viewBox="0 0 ${w} ${h}"><rect x="7" y=".4" width="${w-14}" height="${h-.8}" fill="#3d7ec9" stroke="#2f67a8" stroke-width=".7"/><ellipse cx="7" cy="${h/2}" rx="6.600" ry="${h/2-.4}" fill="#4a87ce" stroke="#2f67a8" stroke-width=".7"/><ellipse cx="${w-7}" cy="${h/2}" rx="6.600" ry="${h/2-.4}" fill="#3d7ec9" stroke="#2f67a8" stroke-width=".7"/></svg><div class="box"><div class="n">${name}</div><div class="t">QUEUE</div><div class="k">${tech}</div><div class="d">${desc}</div></div>`; }
  return '';
});

def('d-label', el => `<style>
:host{position:absolute;${placed(el)}box-sizing:border-box;background:#fff;border-radius:1.500px;box-shadow:0 0 1px rgba(120,120,150,.2);display:flex;flex-direction:column;align-items:center;justify-content:center;text-align:center;white-space:normal;padding:0 1px}
.a{font-size:4.600px;line-height:6.800px;color:#a9afbf;${el.hasAttribute('wrap')?'max-width:45px':'white-space:nowrap'}}.b{font-size:4.200px;line-height:6.400px;font-style:italic;color:#c2c7d3;white-space:nowrap}
</style><span class="a">${esc(el.getAttribute('text'))}</span><span class="b">${esc(el.getAttribute('tech'))}</span>`);

const EDGES = [
 "M932 338C932 360 923 385 923 416",
 "M979 338C981 400 995 460 995 512",
 "M748 379C800 379 812 412 825 428C835 440 855 447 876 447",
 "M923 477V486Q923 488 920 489V715Q920 722 928 722H1056Q1064 722 1064 732",
 "M995 572C997 620 1020 635 1042 650C1075 672 1092 700 1092 732",
 "M1096 572C1097 600 1105 640 1109 655C1115 680 1121 700 1121 732",
 "M1235 425C1235 490 1195 560 1172 625C1160 665 1150 700 1150 732",
 "M1064 801C1064 822 1040 823 1030 824C1012 826 1007 832 1007 845",
 "M1159 740C1195 740 1205 745 1220 755C1235 765 1260 767 1288 767",
 "M1159 767C1190 767 1200 785 1212 810C1225 845 1240 880 1288 880",
 "M1159 793H1255Q1264 794 1266 805Q1269 826 1280 827H1425Q1435 827 1435 837V872Q1435 880 1445 880",
 "M1150 801C1155 860 1175 890 1190 915C1210 955 1228 1000 1231 1034",
 "M1297 801V820Q1297 827 1290 827H1282Q1272 827 1272 837V1006Q1272 1016 1284 1016H1343Q1353 1016 1353 1034",
 "M1298 914V1006Q1298 1016 1292 1018V1116Q1292 1126 1282 1126H1241Q1231 1126 1231 1134",
 "M1384 801V820Q1384 826 1392 827H1408Q1416 827 1416 837V1130Q1416 1139 1405 1139H1366Q1358 1139 1358 1147",
 "M1382 914V1006Q1382 1015 1392 1016H1407Q1415 1016 1415 1026V1130Q1415 1139 1405 1139H1337Q1329 1139 1329 1147",
 "M1497 914C1497 945 1470 990 1440 1030C1410 1075 1387 1110 1387 1147",
 "M1416 1147C1416 1135 1420 1130 1430 1126H1480C1492 1122 1496 1115 1496 1104",
 "M1320 1167H1318Q1311 1167 1311 1175V1213Q1311 1223 1300 1223H1078Q1072 1223 1070 1226L1059 1227",
 "M1059 1087H1155Q1163 1087 1166 1096Q1170 1106 1180 1106H1288Q1297 1106 1297 1096V1070Q1297 1060 1309 1060",
 "M1059 1139C1085 1139 1100 1145 1120 1150C1150 1158 1170 1160 1188 1160",
 "M1548 880C1600 882 1640 905 1683 930C1720 950 1750 963 1785 963",
 "M1340 732C1345 700 1375 680 1413 660C1450 640 1517 610 1517 573",
 "M1340 845Q1340 839 1350 839H1419Q1429 839 1429 829V670Q1429 658 1440 657H1602Q1611 657 1612 651"
];
def('d-edges', () => `<style>:host{position:absolute;left:0;top:0;width:1712px;height:1406px;pointer-events:none}svg{display:block;overflow:visible}</style>
<svg width="1712" height="1406" viewBox="${OX} ${OY} 1712 1406"><defs><marker id="a" viewBox="0 0 6 6" refX="5.500" refY="3" markerWidth="4.500" markerHeight="4.500" markerUnits="userSpaceOnUse" orient="auto"><path d="M0 0 6 3 0 6z" fill="#93a0b5"/></marker></defs>${EDGES.map(d=>`<path d="${d}" fill="none" stroke="#a5afc1" stroke-width="1" marker-end="url(#a)"/>`).join('')}</svg>`);
</script>
</body></html>
